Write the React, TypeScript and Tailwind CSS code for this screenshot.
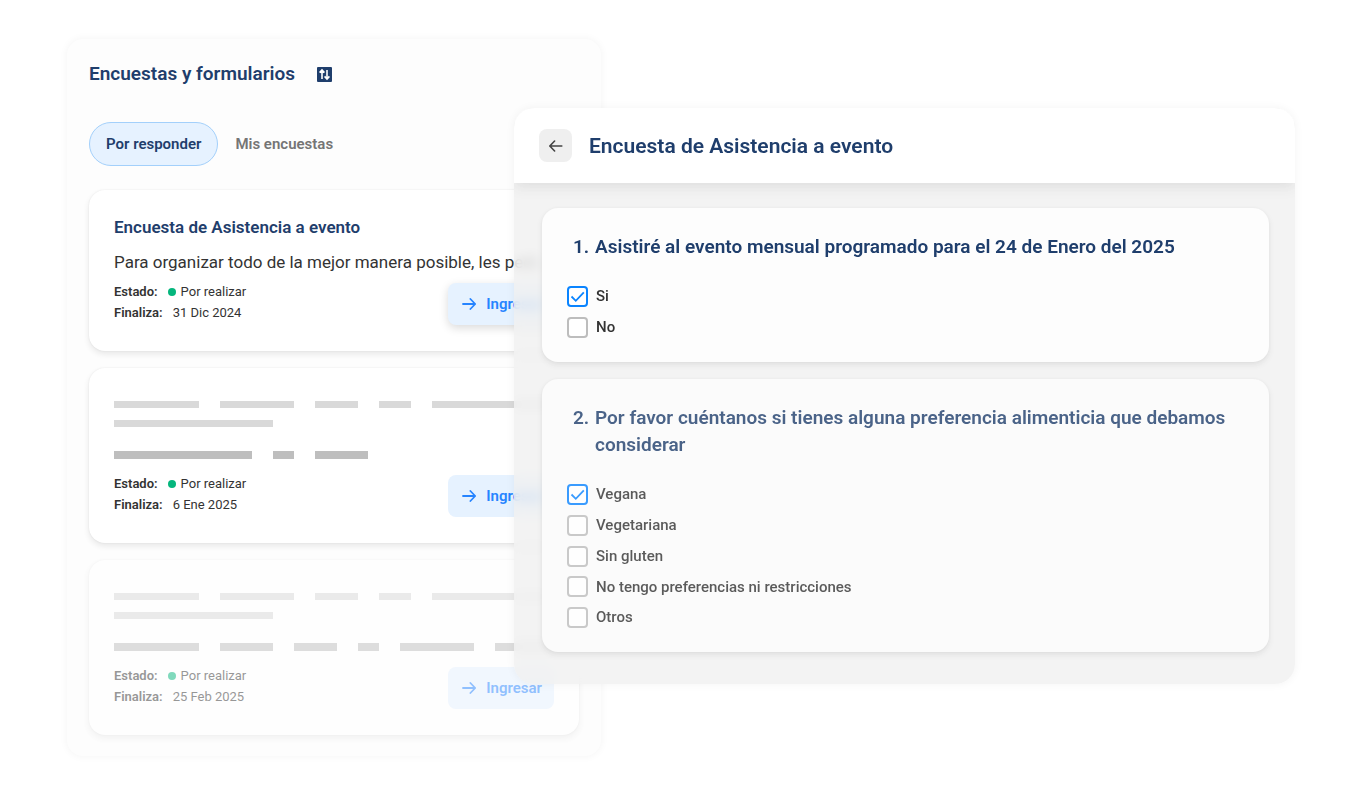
import { useState, type ReactNode } from "react";
import clsx from "clsx";

interface Survey {
  id: string;
  deadline: string;
  title?: string;
  description?: string;
  lines?: number[][];
  faded?: boolean;
  raised?: boolean;
}

const surveys: Survey[] = [
  {
    id: "asistencia",
    title: "Encuesta de Asistencia a evento",
    description: "Para organizar todo de la mejor manera posible, les pedi...",
    deadline: "31 Dic 2024",
    raised: true,
  },
  {
    id: "enero",
    deadline: "6 Ene 2025",
    lines: [[85, 74, 43, 32, 122], [159], [138, 21, 53]],
  },
  {
    id: "febrero",
    deadline: "25 Feb 2025",
    lines: [[85, 74, 43, 32, 122], [159], [85, 53, 43, 21, 74, 59]],
    faded: true,
  },
];

const attendance = ["Si", "No"];
const food = ["Vegana", "Vegetariana", "Sin gluten", "No tengo preferencias ni restricciones", "Otros"];

function SortIcon() {
  return (
    <svg viewBox="0 0 15 15" className="size-[15px]" aria-hidden="true">
      <rect width="15" height="15" rx="1" fill="#1f3e6c" />
      <path d="M5 12V4M2.6 5.6 5 3l2.4 2.6M10 3v8M7.6 9.4 10 12l2.4-2.6" fill="none" stroke="#fff" strokeWidth="1.6" />
    </svg>
  );
}

function ArrowIcon({ back }: { back?: boolean }) {
  return (
    <svg
      viewBox="0 0 14 14"
      className="size-[14px] shrink-0"
      fill="none"
      stroke="currentColor"
      strokeWidth={back ? 1.6 : 1.8}
      strokeLinecap="round"
      strokeLinejoin="round"
      aria-hidden="true"
    >
      {back ? <path d="M12.8 7H1M5.6 2 .8 7l4.8 5" /> : <path d="M1 7h11.8M8.4 2l4.8 5-4.8 5" />}
    </svg>
  );
}

function SkeletonLines({ lines }: { lines: number[][] }) {
  return (
    <div className="flex flex-col gap-3 pt-2 pb-[14px]">
      {lines.map((line, i) => (
        <div key={i} className={clsx("flex gap-[21px] overflow-hidden", i === 2 && "pt-3")}>
          {line.map((width, j) => (
            <span
              key={j}
              className={clsx("shrink-0", i === 2 ? "h-2 bg-[#bebebe]" : "h-[7px] bg-[#d9d9d9]")}
              style={{ width }}
            />
          ))}
        </div>
      ))}
    </div>
  );
}

function SurveyCard({ survey }: { survey: Survey }) {
  return (
    <article
      className={clsx(
        "rounded-2xl bg-white px-[25px] pt-[25px] pb-[26px] shadow-[0_3px_6px_rgba(0,0,0,0.09),0_0_2px_rgba(0,0,0,0.07)]",
        survey.faded && "opacity-50",
      )}
    >
      {survey.title && <h2 className="text-[17px] leading-6 font-semibold text-[#1f3e6c]">{survey.title}</h2>}
      {survey.description && (
        <p className="mt-[10px] mb-[6px] text-[17px] leading-[26px] whitespace-nowrap">{survey.description}</p>
      )}
      {survey.lines && <SkeletonLines lines={survey.lines} />}
      <div className="flex items-start justify-between">
        <dl className="text-[13px] leading-[21px]">
          <div className="flex">
            <dt className="font-semibold">Estado:</dt>
            <dd className="ml-[10px] flex items-center gap-[5px]">
              <span className="size-2 rounded-full bg-[#05b67d]" />
              Por realizar
            </dd>
          </div>
          <div className="flex">
            <dt className="font-semibold">Finaliza:</dt>
            <dd className="ml-[10px]">{survey.deadline}</dd>
          </div>
        </dl>
        <button
          type="button"
          className={clsx(
            "mt-[2px] flex h-[42px] items-center gap-[10px] rounded-lg bg-[#e6f2ff] pr-3 pl-[14px] text-[15px] font-semibold text-[#2684ff]",
            survey.raised && "shadow-[0_3px_10px_rgba(0,0,0,0.15)]",
          )}
        >
          <ArrowIcon />
          Ingresar
        </button>
      </div>
    </article>
  );
}

function Option({ label, defaultChecked }: { label: string; defaultChecked?: boolean }) {
  return (
    <label className="flex h-[21px] items-center gap-2 text-[15px] font-medium">
      <span className="grid size-[21px] shrink-0 *:col-start-1 *:row-start-1">
        <input
          type="checkbox"
          defaultChecked={defaultChecked}
          className="peer size-[21px] appearance-none rounded-[4px] border-2 border-[#bdbdbd] bg-white checked:border-[#0a84ff]"
        />
        <svg
          viewBox="0 0 21 21"
          className="pointer-events-none invisible size-[21px] peer-checked:visible"
          fill="none"
          stroke="#0a84ff"
          strokeWidth="1.8"
          aria-hidden="true"
        >
          <path d="M4.5 10.5 8.8 14.8 16.8 6.4" />
        </svg>
      </span>
      {label}
    </label>
  );
}

interface QuestionProps {
  number: number;
  title: string;
  className: string;
  children: ReactNode;
}

function Question({ number, title, className, children }: QuestionProps) {
  const titleId = `question-${number}`;

  return (
    <div
      role="group"
      aria-labelledby={titleId}
      className={clsx(
        "flex flex-col rounded-2xl px-[25px] pt-[25px] pb-6 shadow-[0_3px_6px_rgba(0,0,0,0.08),0_0_3px_rgba(0,0,0,0.04)]",
        className,
      )}
    >
      <h3 id={titleId} className="mb-[26px] flex pl-[6px] text-[19px] leading-[27px] font-semibold text-[#1f3e6c]">
        <span className="w-[22px] shrink-0">{number}.</span>
        <span>{title}</span>
      </h3>
      <div className="flex flex-1 flex-col justify-between">{children}</div>
    </div>
  );
}

export default function App() {
  const [tab, setTab] = useState("pending");
  const tabs = [
    { id: "pending", label: "Por responder" },
    { id: "mine", label: "Mis encuestas" },
  ];

  return (
    <main className="grid min-h-screen grid-cols-[447fr_87fr_694fr] items-start bg-white py-[39px] pr-[68px] pl-[67px] font-[Roboto,sans-serif] text-[#333]">
      <section className="col-span-2 col-start-1 row-start-1 rounded-2xl bg-[#fdfdfd] px-[22px] pt-[23px] pb-[21px] shadow-[0_0_8px_rgba(0,0,0,0.05)]">
        <header className="flex items-center gap-[22px]">
          <h1 className="text-[19px] leading-6 font-semibold text-[#1f3e6c]">Encuestas y formularios</h1>
          <button type="button" aria-label="Ordenar">
            <SortIcon />
          </button>
        </header>
        <nav className="mt-9 mb-6 flex">
          {tabs.map((t) => (
            <button
              key={t.id}
              type="button"
              onClick={() => setTab(t.id)}
              className={clsx(
                "h-[44px] rounded-full border px-4 text-[15px] font-semibold",
                tab === t.id ? "border-[#a3d0fb] bg-[#e6f2ff] text-[#1f3e6c]" : "border-transparent text-[#757575]",
              )}
            >
              {t.label}
            </button>
          ))}
        </nav>
        <div className="flex flex-col gap-[17px]">
          {surveys.map((survey) => (
            <SurveyCard key={survey.id} survey={survey} />
          ))}
        </div>
      </section>

      <section className="z-10 col-span-2 col-start-2 row-start-1 mt-[69px] overflow-hidden rounded-[20px] bg-[#f0f0f0]/80 shadow-[0_0_10px_rgba(0,0,0,0.05)] backdrop-blur-[6px]">
        <header className="flex h-[75px] items-center gap-[17px] bg-white px-[25px] shadow-[0_3px_14px_rgba(0,0,0,0.1)]">
          <button
            type="button"
            aria-label="Volver"
            className="grid size-[33px] place-items-center rounded-lg bg-[#efefef] text-[#444]"
          >
            <ArrowIcon back />
          </button>
          <h2 className="text-[21px] leading-7 font-semibold text-[#1f3e6c]">Encuesta de Asistencia a evento</h2>
        </header>
        <form className="flex flex-col gap-[17px] pt-[25px] pr-[26px] pb-8 pl-7">
          <Question
            number={1}
            title="Asistiré al evento mensual programado para el 24 de Enero del 2025"
            className="min-h-[154px] bg-[#fdfdfd]"
          >
            {attendance.map((label, i) => (
              <Option key={label} label={label} defaultChecked={i === 0} />
            ))}
          </Question>
          <Question
            number={2}
            title="Por favor cuéntanos si tienes alguna preferencia alimenticia que debamos considerar"
            className="min-h-[273px] bg-[#fbfbfb] *:opacity-80"
          >
            {food.map((label, i) => (
              <Option key={label} label={label} defaultChecked={i === 0} />
            ))}
          </Question>
        </form>
      </section>
    </main>
  );
}
